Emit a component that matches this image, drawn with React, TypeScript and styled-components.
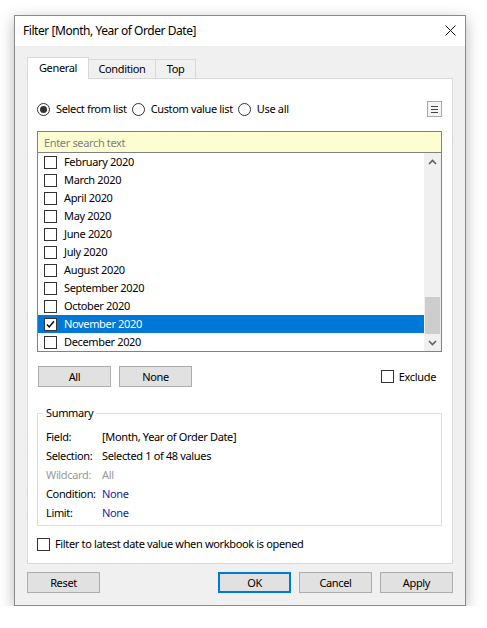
import React from 'react';
import styled, { createGlobalStyle } from 'styled-components';

const GlobalStyle = createGlobalStyle`
  html, body {
    margin: 0;
    padding: 0;
    background: #ffffff;
  }
  body {
    font-family: "Noto Sans", "Open Sans", sans-serif;
    font-size: 11px;
    letter-spacing: -0.35px;
    color: #000000;
  }
  * { box-sizing: border-box; }
`;

const MONTHS = [
    'February 2020',
    'March 2020',
    'April 2020',
    'May 2020',
    'June 2020',
    'July 2020',
    'August 2020',
    'September 2020',
    'October 2020',
    'November 2020',
    'December 2020',
];

const SELECTED = 'November 2020';

interface SummaryItem {
    label: string
    value: string
    tone: 'normal' | 'muted' | 'link'
}

const SUMMARY: SummaryItem[] = [
    { label: 'Field:', value: '[Month, Year of Order Date]', tone: 'normal' },
    { label: 'Selection:', value: 'Selected 1 of 48 values', tone: 'normal' },
    { label: 'Wildcard:', value: 'All', tone: 'muted' },
    { label: 'Condition:', value: 'None', tone: 'link' },
    { label: 'Limit:', value: 'None', tone: 'link' },
];

const CheckMark = () => (
    <svg width="11" height="11" viewBox="0 0 11 11">
        <path d="M2 5.5 L4.3 8 L9 2.2" fill="none" stroke="#000" strokeWidth="1.4" />
    </svg>
);

const Chevron: React.FC<{ up?: boolean }> = ({ up }) => (
    <svg width="9" height="6" viewBox="0 0 9 6">
        <path
            d={up ? 'M1 5 L4.5 1.5 L8 5' : 'M1 1 L4.5 4.5 L8 1'}
            fill="none"
            stroke="#606060"
            strokeWidth="1.6"
        />
    </svg>
);

const App: React.FC = () => {
    return (
        <>
            <GlobalStyle />
            <Page>
                <Dialog>
                    <TitleBar>
                        <Title>Filter [Month, Year of Order Date]</Title>
                        <CloseButton>
                            <svg width="11" height="11" viewBox="0 0 11 11">
                                <path d="M0.5 0.5 L10.5 10.5 M10.5 0.5 L0.5 10.5" stroke="#111" strokeWidth="1" />
                            </svg>
                        </CloseButton>
                    </TitleBar>

                    <Body>
                        <Tabs>
                            <Tab active width={62}>General</Tab>
                            <Tab width={67}>Condition</Tab>
                            <Tab width={40}>Top</Tab>
                        </Tabs>

                        <Panel>
                            <RadioRow>
                                <RadioOption>
                                    <Radio checked />
                                    Select from list
                                </RadioOption>
                                <RadioOption>
                                    <Radio />
                                    Custom value list
                                </RadioOption>
                                <RadioOption>
                                    <Radio />
                                    Use all
                                </RadioOption>
                                <MenuButton>
                                    <MenuLine />
                                    <MenuLine />
                                    <MenuLine />
                                </MenuButton>
                            </RadioRow>

                            <ListBox>
                                <Search placeholder="Enter search text" />
                                <ListArea>
                                    <Rows>
                                        {MONTHS.map((m) => (
                                            <Row key={m} selected={m === SELECTED}>
                                                <Check>{m === SELECTED && <CheckMark />}</Check>
                                                {m}
                                            </Row>
                                        ))}
                                    </Rows>
                                    <ScrollBar>
                                        <ScrollArrow><Chevron up /></ScrollArrow>
                                        <ScrollTrack>
                                            <ScrollThumb />
                                        </ScrollTrack>
                                        <ScrollArrow><Chevron /></ScrollArrow>
                                    </ScrollBar>
                                </ListArea>
                            </ListBox>

                            <ButtonRow>
                                <Button>All</Button>
                                <Button>None</Button>
                                <CheckLabel>
                                    <Check />
                                    Exclude
                                </CheckLabel>
                            </ButtonRow>

                            <Summary>
                                <Legend>Summary</Legend>
                                <SummaryGrid>
                                    {SUMMARY.map((s) => (
                                        <React.Fragment key={s.label}>
                                            <SummaryCell tone={s.tone === 'muted' ? 'muted' : 'normal'}>{s.label}</SummaryCell>
                                            <SummaryCell tone={s.tone}>{s.value}</SummaryCell>
                                        </React.Fragment>
                                    ))}
                                </SummaryGrid>
                            </Summary>

                            <FilterRow>
                                <Check />
                                Filter to latest date value when workbook is opened
                            </FilterRow>
                        </Panel>

                        <Footer>
                            <Button>Reset</Button>
                            <Spacer />
                            <Button primary>OK</Button>
                            <Button>Cancel</Button>
                            <Button>Apply</Button>
                        </Footer>
                    </Body>
                </Dialog>
            </Page>
        </>
    )
}

export default App

const Page = styled.div`
    padding: 15px 0 0 14px;
`

const Dialog = styled.div`
    width: 452px;
    height: 591px;
    background: #f0f0f0;
    border: 1px solid #8a8a8a;
    box-shadow: 0 4px 14px rgba(0, 0, 0, 0.28);
    display: flex;
    flex-direction: column;
`

const TitleBar = styled.div`
    height: 30px;
    background: #ffffff;
    display: flex;
    align-items: center;
    justify-content: space-between;
    padding: 0 9px 0 8px;
`

const Title = styled.div`
    font-size: 12px;
    line-height: 16px;
    letter-spacing: -0.45px;
`

const CloseButton = styled.div`
    width: 11px;
    height: 11px;
    display: flex;
    margin-top: -2px;
`

const Body = styled.div`
    padding: 11px 12px 0 12px;
    display: flex;
    flex-direction: column;
`

const Tabs = styled.div`
    display: flex;
    align-items: flex-end;
    height: 21px;
    position: relative;
    z-index: 1;
`

interface ITab {
    active?: boolean
    width: number
}

const Tab = styled.div<ITab>`
    width: ${(p) => p.width}px;
    height: ${(p) => (p.active ? '22px' : '19px')};
    margin-bottom: ${(p) => (p.active ? '-1px' : '0')};
    background: ${(p) => (p.active ? '#ffffff' : '#f0f0f0')};
    border: 1px solid #d9d9d9;
    border-bottom: none;
    border-left-width: ${(p) => (p.active ? '1px' : '0')};
    display: flex;
    align-items: center;
    justify-content: center;
    padding-bottom: ${(p) => (p.active ? '1px' : '0')};
    line-height: 16px;
`

const Panel = styled.div`
    height: 486px;
    background: #ffffff;
    border: 1px solid #d9d9d9;
    padding: 22px 10px 0 9px;
    display: flex;
    flex-direction: column;
`

const RadioRow = styled.div`
    display: flex;
    align-items: center;
    height: 16px;
    gap: 5px;
`

const RadioOption = styled.label`
    display: flex;
    align-items: center;
    gap: 6px;
    line-height: 16px;
`

const Radio = styled.span<{ checked?: boolean }>`
    width: 13px;
    height: 13px;
    border-radius: 50%;
    border: 1px solid #333333;
    background: #ffffff;
    display: flex;
    align-items: center;
    justify-content: center;

    &::after {
        content: '';
        width: 7px;
        height: 7px;
        border-radius: 50%;
        background: ${(p) => (p.checked ? '#333333' : 'transparent')};
    }
`

const MenuButton = styled.div`
    margin-left: auto;
    width: 15px;
    height: 16px;
    border: 1px solid #a8a8a8;
    background: #f4f4f4;
    display: flex;
    flex-direction: column;
    align-items: center;
    justify-content: center;
    gap: 2px;
`

const MenuLine = styled.span`
    width: 7px;
    height: 1px;
    background: #444444;
`

const ListBox = styled.div`
    margin-top: 14px;
    border: 1px solid #828282;
    display: flex;
    flex-direction: column;
`

const Search = styled.input`
    height: 21px;
    border: none;
    border-bottom: 1px solid #828282;
    background: #fdfdd2;
    padding: 0 0 0 6px;
    font: inherit;
    letter-spacing: inherit;
    outline: none;

    &::placeholder {
        color: #808080;
    }
`

const ListArea = styled.div`
    height: 198px;
    display: flex;
`

const Rows = styled.div`
    flex: 1;
    display: flex;
    flex-direction: column;
`

const Row = styled.div<{ selected?: boolean }>`
    height: 18px;
    display: flex;
    align-items: center;
    gap: 7px;
    padding-left: 6px;
    background: ${(p) => (p.selected ? '#0078d7' : 'transparent')};
    color: ${(p) => (p.selected ? '#ffffff' : '#000000')};
    line-height: 16px;
`

const Check = styled.span`
    width: 13px;
    height: 13px;
    border: 1px solid #333333;
    background: #ffffff;
    display: flex;
    align-items: center;
    justify-content: center;
    flex-shrink: 0;
`

const ScrollBar = styled.div`
    width: 17px;
    background: #f0f0f0;
    display: flex;
    flex-direction: column;
`

const ScrollArrow = styled.div`
    height: 17px;
    display: flex;
    align-items: center;
    justify-content: center;
`

const ScrollTrack = styled.div`
    flex: 1;
    display: flex;
    flex-direction: column;
    justify-content: flex-end;
    padding: 0 1px;
`

const ScrollThumb = styled.div`
    height: 37px;
    background: #cdcdcd;
`

const ButtonRow = styled.div`
    margin-top: 14px;
    display: flex;
    align-items: center;
    gap: 8px;
    padding-left: 1px;
`

interface IButton {
    primary?: boolean
}

const Button = styled.button<IButton>`
    width: 73px;
    height: 21px;
    padding: 1px 0 0;
    font: inherit;
    letter-spacing: inherit;
    color: #000000;
    background: #e1e1e1;
    border: ${(p) => (p.primary ? '2px solid #0078d7' : '1px solid #adadad')};
    line-height: 16px;
`

const CheckLabel = styled.label`
    margin-left: auto;
    margin-right: 6px;
    display: flex;
    align-items: center;
    gap: 5px;
    line-height: 16px;
`

const Summary = styled.fieldset`
    margin: 18px 0 0;
    padding: 6px 8px 3px;
    border: 1px solid #dcdcdc;
    min-width: 0;
`

const Legend = styled.legend`
    padding: 0 3px;
    margin-left: -3px;
    line-height: 16px;
`

const SummaryGrid = styled.div`
    display: grid;
    grid-template-columns: 56px 1fr;
    grid-auto-rows: 19px;
    align-items: center;
`

interface ISummaryCell {
    tone: 'normal' | 'muted' | 'link'
}

const SummaryCell = styled.div<ISummaryCell>`
    line-height: 16px;
    white-space: nowrap;
    color: ${(p) => (p.tone === 'muted' ? '#9a9a9a' : p.tone === 'link' ? '#1c1ca8' : '#000000')};
`

const FilterRow = styled.label`
    margin-top: 10px;
    display: flex;
    align-items: center;
    gap: 5px;
    line-height: 16px;
`

const Footer = styled.div`
    margin-top: 8px;
    display: flex;
    gap: 8px;
`

const Spacer = styled.div`
    flex: 1;
`
